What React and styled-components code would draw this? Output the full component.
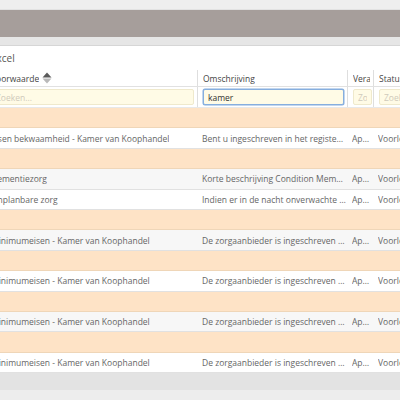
import React from "react"
import styled, { createGlobalStyle } from "styled-components"

const GlobalStyle = createGlobalStyle`
  html, body {
    margin: 0;
    padding: 0;
    background: #ececec;
    overflow: hidden;
    font-family: "Open Sans", "Liberation Sans", sans-serif;
  }
`

const Page = styled.div`
  width: 400px;
  height: 400px;
  overflow: hidden;
  display: flex;
  flex-direction: column;
`

const TopStrip = styled.div`
  height: 10px;
  background: #eeeeee;
  border-bottom: 1px solid #e2e2e2;
  box-sizing: border-box;
`

const Bar = styled.div`
  height: 27px;
  background: #a69e9b;
`

const Spacer = styled.div`
  height: 8px;
  background: #e6e6e6;
`

const Panel = styled.div`
  margin-left: -14px;
  width: 460px;
  background: #fff;
  border-top: 1px solid #d6d6d6;
`

const Title = styled.div`
  height: 24px;
  padding: 0 5px;
  display: flex;
  align-items: center;
  font-size: 10px;
  color: #555;
`

const Row = styled.div`
  display: grid;
  grid-template-columns: 211px 150px 26px 1fr;
  height: ${p => p.$h || 20.4}px;
  box-sizing: border-box;
  background: ${p => p.$bg || "#fff"};
  border-bottom: 1px solid ${p => p.$line || "#e1e1e1"};
`

const Cell = styled.div`
  padding: 0 ${p => (p.$tight ? 1 : 3)}px 0 5px;
  display: flex;
  align-items: center;
  min-width: 0;
  overflow: hidden;
  white-space: nowrap;
  font-size: 8.5px;
  color: ${p => (p.$head ? "#444" : "#666")};
  border-left: ${p => (p.$sep ? "1px solid #dedede" : "none")};
  span {
    overflow: hidden;
    text-overflow: ${p => (p.$head ? "clip" : "ellipsis")};
  }
`

const Filter = styled.input`
  width: 100%;
  min-width: 0;
  height: 16px;
  box-sizing: border-box;
  padding: 0 4px;
  font-family: inherit;
  font-size: 8.5px;
  color: #333;
  background: #fffbe6;
  border: 1px solid ${p => (p.$focus ? "#86aede" : "#efe9cc")};
  box-shadow: ${p => (p.$focus ? "0 0 0 0.5px #86aede" : "none")};
  border-radius: 2px;
  outline: none;
  text-overflow: clip;
  &::placeholder {
    color: #cfcabb;
    text-overflow: clip;
  }
`

const Footer = styled.div`
  height: 17px;
  background: #e3e3e3;
`

const Rest = styled.div`
  flex: 1;
  background: #ededed;
`

const SortIcon = () => (
  <svg width="10" height="12" viewBox="0 0 10 12" style={{ marginLeft: 3, flexShrink: 0 }}>
    <path d="M5 0.5 L9.5 5.5 H0.5 Z" fill="#5a5a5a" />
    <path d="M5 11.5 L9.5 6.5 H0.5 Z" fill="#b9b9b9" />
  </svg>
)

const rows = [
  { type: "group" },
  { bg: "#fff", name: "Eisen bekwaamheid - Kamer van Koophandel", desc: "Bent u ingeschreven in het register van de Kamer van Koophandel" },
  { type: "group" },
  { bg: "#f7f7f7", name: "Dementiezorg", desc: "Korte beschrijving Condition Member dementiezorg" },
  { bg: "#fff", name: "Onplanbare zorg", desc: "Indien er in de nacht onverwachte zorg nodig is" },
  { type: "group" },
  { bg: "#f7f7f7", name: "Minimumeisen - Kamer van Koophandel", desc: "De zorgaanbieder is ingeschreven in het handelsregister" },
  { type: "group" },
  { bg: "#fff", name: "Minimumeisen - Kamer van Koophandel", desc: "De zorgaanbieder is ingeschreven in het handelsregister" },
  { type: "group" },
  { bg: "#f7f7f7", name: "Minimumeisen - Kamer van Koophandel", desc: "De zorgaanbieder is ingeschreven in het handelsregister" },
  { type: "group" },
  { bg: "#fff", name: "Minimumeisen - Kamer van Koophandel", desc: "De zorgaanbieder is ingeschreven in het handelsregister" },
]

export default function App() {
  return (
    <Page>
      <GlobalStyle />
      <TopStrip />
      <Bar />
      <Spacer />
      <Panel>
        <Title>Excel</Title>
        <Row $h={17}>
          <Cell $head>
            <span>Voorwaarde</span>
            <SortIcon />
          </Cell>
          <Cell $head $sep><span>Omschrijving</span></Cell>
          <Cell $head $sep><span>Verantwoordelijke</span></Cell>
          <Cell $head $sep><span>Status</span></Cell>
        </Row>
        <Row $h={21} $line="#e8e8e8">
          <Cell><Filter placeholder="Zoeken..." /></Cell>
          <Cell $sep><Filter $focus defaultValue="kamer" autoFocus /></Cell>
          <Cell $sep $tight><Filter placeholder="Zoeken..." /></Cell>
          <Cell $sep><Filter placeholder="Zoeken..." /></Cell>
        </Row>
        {rows.map((r, i) =>
          r.type === "group" ? (
            <Row key={i} $bg="#fee3c6" $line="#efd6b8">
              <Cell />
              <Cell />
              <Cell />
              <Cell />
            </Row>
          ) : (
            <Row key={i} $bg={r.bg}>
              <Cell><span>{r.name}</span></Cell>
              <Cell $tight><span>{r.desc}</span></Cell>
              <Cell $tight><span>Approved</span></Cell>
              <Cell><span>Voorlopig</span></Cell>
            </Row>
          )
        )}
        <Footer />
      </Panel>
      <Rest />
    </Page>
  )
}
